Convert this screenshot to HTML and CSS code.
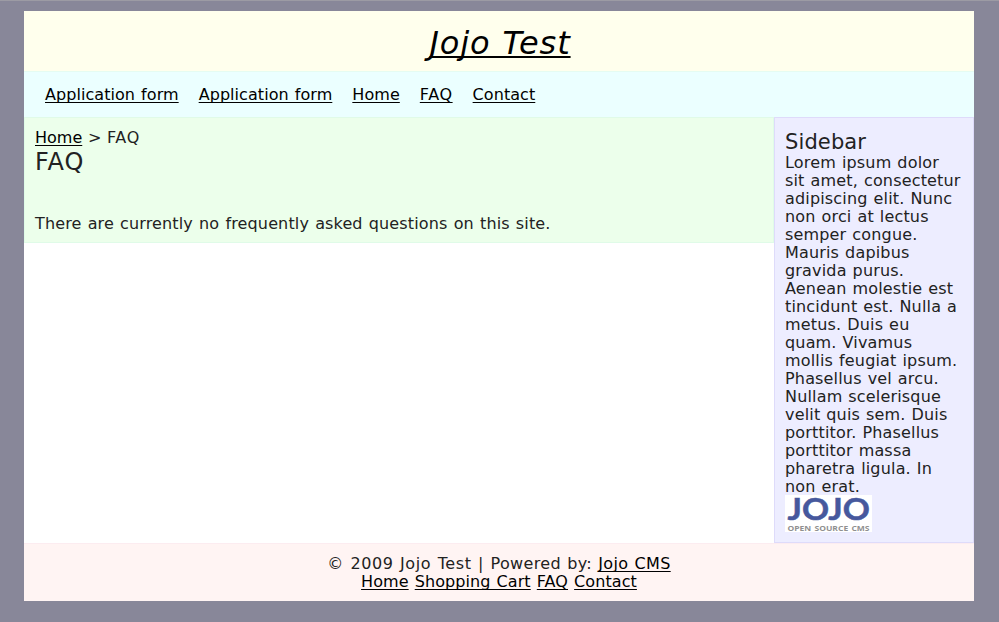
FILE: index.html
```
<!DOCTYPE html>
<html lang="en">
<head>
<meta charset="utf-8">
<title>FAQ | Jojo Test</title>
<link rel="stylesheet" href="styles.css">
</head>
<body>
<div class="page">
  <header class="header"><h1><a href="#">Jojo Test</a></h1></header>
  <nav class="nav">
    <a href="#">Application form</a>
    <a href="#">Application form</a>
    <a href="#">Home</a>
    <a href="#" class="short">FAQ</a>
    <a href="#">Contact</a>
  </nav>
  <div class="columns">
    <main class="content">
      <div class="crumbs"><a href="#">Home</a> &gt; <span class="short">FAQ</span></div>
      <h2>FAQ</h2>
      <p class="message">There are currently no frequently asked questions on this site.</p>
    </main>
    <aside class="sidebar">
      <h3>Sidebar</h3>
      <p>Lorem ipsum dolor<br>sit amet, consectetur<br>adipiscing elit. Nunc<br>non orci at lectus<br>semper congue.<br>Mauris dapibus<br>gravida purus.<br>Aenean molestie est<br>tincidunt est. Nulla a<br>metus. Duis eu<br>quam. Vivamus<br>mollis feugiat ipsum.<br>Phasellus vel arcu.<br>Nullam scelerisque<br>velit quis sem. Duis<br>porttitor. Phasellus<br>porttitor massa<br>pharetra ligula. In<br>non erat.</p>
      <svg class="logo" width="87" height="37" viewBox="0 0 87 37">
        <rect width="87" height="37" fill="#fff"/>
        <text class="logo-name" x="2.5" y="24.7" textLength="82.5" lengthAdjust="spacingAndGlyphs">JOJO</text>
        <text class="logo-tag" x="2.5" y="35.7" textLength="82" lengthAdjust="spacingAndGlyphs">OPEN SOURCE CMS</text>
      </svg>
    </aside>
  </div>
  <footer class="footer">
    <div class="copyright"><span class="owner">© 2009 Jojo Test | </span>Powered by: <a href="#">Jojo CMS</a></div>
    <div class="footer-links"><a href="#">Home</a> <a href="#">Shopping Cart</a> <a href="#">FAQ</a> <a href="#">Contact</a></div>
  </footer>
</div>
</body>
</html>
```

FILE: styles.css
```
* { box-sizing: border-box; }
body {
  margin: 0;
  height: 622px;
  overflow: hidden;
  border-top: 1px solid #9c9ba4;
  background: #888799;
  color: #222;
  font: 16px/18px "DejaVu Sans", Verdana, sans-serif;
  letter-spacing: 0.12px;
  word-spacing: 0.9px;
}
h1, h2, h3, p { margin: 0; font-weight: normal; }
a {
  color: #000;
  text-decoration: underline;
  text-decoration-thickness: 1px;
  text-underline-offset: 2px;
  text-decoration-skip-ink: none;
}
.page {
  width: 950px;
  height: 590px;
  margin: 10px 0 0 24px;
  background: #fff;
}
.header {
  height: 60px;
  padding: 12px 0 0 2px;
  background: #ffffed;
  text-align: center;
}
.header h1 {
  font-size: 32px;
  line-height: 40px;
  font-style: italic;
  letter-spacing: 0.9px;
}
.header a { text-decoration-thickness: 2px; }
.nav {
  display: flex;
  gap: 20px;
  height: 46px;
  padding: 14px 20px 0 21px;
  border-top: 1px solid #e5fcf2;
  background: #ebffff;
  letter-spacing: 0.06px;
}
.short { letter-spacing: 0.6px; }
.columns { display: flex; align-items: flex-start; height: 426px; }
.content {
  width: 750px;
  height: 126px;
  padding: 11px 10px 10px;
  border: 1px solid #e0fbe8;
  background: #ecffeb;
}
.crumbs { letter-spacing: 0; word-spacing: 0.6px; }
.content h2 { padding-top: 1px; font-size: 24px; line-height: 29px; letter-spacing: 0.9px; }
.message { margin-top: 38px; letter-spacing: 0.14px; }
.sidebar {
  width: 200px;
  height: 426px;
  padding: 13px 0 0 10px;
  border: 1px solid #dedbfa;
  background: #ededff;
}
.sidebar h3 { font-size: 21px; line-height: 23px; }
.sidebar p { white-space: nowrap; letter-spacing: 0.17px; word-spacing: 0.7px; }
.logo { display: block; margin-top: -1px; overflow: visible; }
.logo-name { font: bold 31px Lato, sans-serif; fill: #46589d; stroke: #46589d; stroke-width: 0.5px; }
.logo-tag { font: bold 7.5px "Open Sans", sans-serif; fill: #909090; letter-spacing: 0; }
.footer {
  height: 58px;
  padding-top: 11px;
  border-top: 1px solid #fcecf0;
  background: #fff4f3;
  text-align: center;
}
.copyright { letter-spacing: 0.32px; }
.owner { letter-spacing: 0.58px; }
.footer-links { letter-spacing: 0.08px; }
```
